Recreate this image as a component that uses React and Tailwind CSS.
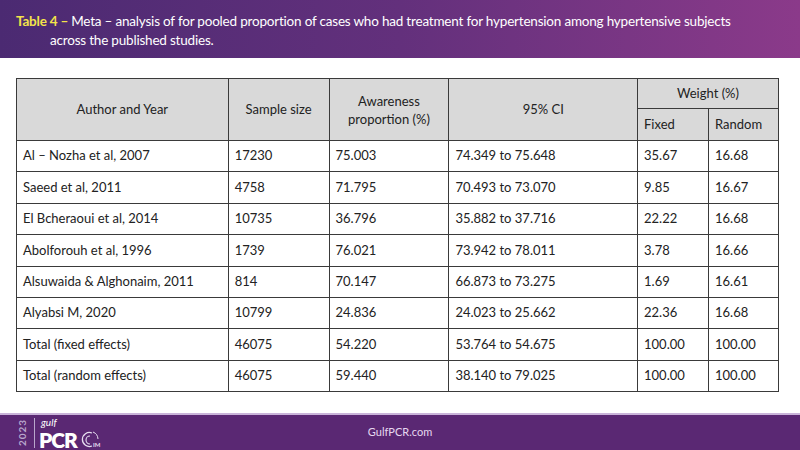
import React from 'react';

const rows = [
  ['Al – Nozha et al, 2007', '17230', '75.003', '74.349 to 75.648', '35.67', '16.68'],
  ['Saeed et al, 2011', '4758', '71.795', '70.493 to 73.070', '9.85', '16.67'],
  ['El Bcheraoui et al, 2014', '10735', '36.796', '35.882 to 37.716', '22.22', '16.68'],
  ['Abolforouh et al, 1996', '1739', '76.021', '73.942 to 78.011', '3.78', '16.66'],
  ['Alsuwaida & Alghonaim, 2011', '814', '70.147', '66.873 to 73.275', '1.69', '16.61'],
  ['Alyabsi M, 2020', '10799', '24.836', '24.023 to 25.662', '22.36', '16.68'],
  ['Total (fixed effects)', '46075', '54.220', '53.764 to 54.675', '100.00', '100.00'],
  ['Total (random effects)', '46075', '59.440', '38.140 to 79.025', '100.00', '100.00'],
];

const cell = 'border-[1.5px] border-[#3a3a3a] px-[6px] text-left align-middle';
const head = 'border-[1.5px] border-[#3a3a3a] bg-[#d9d9d9] text-center align-middle font-normal';

const Logo = () => (
  <div className="flex items-center gap-[4px]">
    <div className="flex h-[36px] w-[14px] items-center justify-center">
      <span className="-rotate-90 text-[10px] font-bold tracking-[1px] text-[#b9a6cc]">2023</span>
    </div>
    <div className="h-[30px] w-px bg-[#b9a6cc]" />
    <div className="flex flex-col gap-[3px]">
      <span className="ml-[2px] text-[10px] italic leading-[9px] text-white">gulf</span>
      <div className="flex items-end">
        <span className="text-[21px] font-extrabold leading-[17px] tracking-[-1px] text-white">PCR</span>
        <svg width="24" height="18" viewBox="0 0 24 18" className="ml-[3px]">
          <path d="M12 3 A7 7 0 1 0 12 16" fill="none" stroke="#e6def0" strokeWidth="1.3" />
          <path d="M10 6 A4 4 0 1 0 10 14" fill="none" stroke="#e6def0" strokeWidth="1.1" />
          <path d="M13 2 A8 8 0 0 1 18 9" fill="none" stroke="#e6def0" strokeWidth="1" />
          <text x="13" y="17" fontSize="6" fill="#e6def0" fontFamily="Lato, sans-serif" fontWeight="700">IM</text>
        </svg>
      </div>
    </div>
  </div>
);

export default function App() {
  return (
    <div className="flex h-[450px] w-[800px] flex-col bg-white font-['Lato',sans-serif]">
      <div className="h-[58px] bg-gradient-to-r from-[#4b2a72] via-[#63307c] to-[#8b3a8a] px-[16px] pt-[12px] text-[13.5px] leading-[19px] tracking-[-0.2px] text-white">
        <div>
          <span className="font-bold text-[#f4e34a]">Table 4 – </span>
          <span>Meta – analysis of for pooled proportion of cases who had treatment for hypertension among hypertensive subjects</span>
        </div>
        <div className="pl-[34px]">across the published studies.</div>
      </div>

      <div className="flex-1 px-[16px] pt-[20px]">
        <table className="w-[763px] border-collapse text-[13px] text-[#222]">
          <colgroup>
            <col className="w-[212px]" />
            <col className="w-[101px]" />
            <col className="w-[120px]" />
            <col className="w-[189px]" />
            <col className="w-[71px]" />
            <col className="w-[70px]" />
          </colgroup>
          <thead>
            <tr className="h-[30px]">
              <th rowSpan={2} className={head}>Author and Year</th>
              <th rowSpan={2} className={head}>Sample size</th>
              <th rowSpan={2} className={`${head} leading-[18px]`}>Awareness<br />proportion (%)</th>
              <th rowSpan={2} className={head}>95% CI</th>
              <th colSpan={2} className={head}>Weight (%)</th>
            </tr>
            <tr className="h-[32px]">
              <th className={`${head} px-[6px] text-left`}>Fixed</th>
              <th className={`${head} px-[6px] text-left`}>Random</th>
            </tr>
          </thead>
          <tbody>
            {rows.map((r) => (
              <tr key={r[0]} className="h-[31.4px]">
                {r.map((v, i) => (
                  <td key={i} className={cell}>{v}</td>
                ))}
              </tr>
            ))}
          </tbody>
        </table>
      </div>

      <div className="relative flex h-[37px] items-center border-t-[2px] border-[#c9b3d9] bg-[#5a2873] px-[16px]">
        <Logo />
        <span className="absolute left-1/2 -translate-x-1/2 text-[11px] text-[#e6d8f0]">GulfPCR.com</span>
      </div>
    </div>
  );
}
